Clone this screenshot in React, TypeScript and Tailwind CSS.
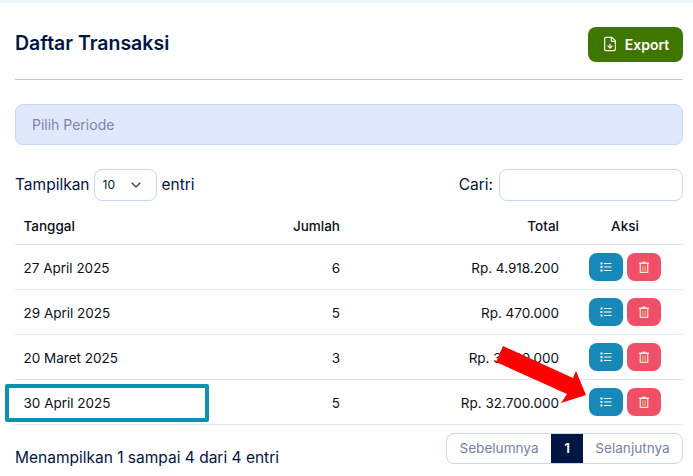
import { ChevronDown, FileDown } from "lucide-react";

const rows = [
  { date: "27 April 2025", qty: 6, total: "Rp. 4.918.200" },
  { date: "29 April 2025", qty: 5, total: "Rp. 470.000" },
  { date: "20 Maret 2025", qty: 3, total: "Rp. 3.500.000" },
  { date: "30 April 2025", qty: 5, total: "Rp. 32.700.000" },
];

function ListIcon() {
  return (
    <svg width="12" height="10" viewBox="0 0 12 10">
      <rect x="0.5" y="0.5" width="2" height="2" fill="#fff" />
      <rect x="0.5" y="4" width="2" height="2" fill="#fff" />
      <rect x="0.5" y="7.5" width="2" height="2" fill="#fff" />
      <path d="M4 1.5H11.5M4 5H11.5M4 8.5H11.5" stroke="#fff" strokeWidth="1.1" />
    </svg>
  );
}

function TrashIcon() {
  return (
    <svg width="12" height="12" viewBox="0 0 12 12" fill="none">
      <path d="M4.5 0.6H7.5V1.6H11V3H1V1.6H4.5Z" fill="#ffe9df" />
      <path d="M2.3 3V11.4H9.7V3" stroke="#ffe9df" strokeWidth="1.2" />
      <path d="M4.6 4.5V10M6 4.5V10M7.4 4.5V10" stroke="#f9a05f" strokeWidth="1" />
    </svg>
  );
}

export default function App() {
  return (
    <div className="relative h-[476px] w-[693px] overflow-hidden bg-white font-['Inter',sans-serif] text-[#001642]">
      <div className="h-[3px] bg-[#eff4ff]" />
      <div className="pr-[10px] pl-[15px]">
        {/* header */}
        <div className="flex h-[77px] items-center justify-between border-b border-[#c4c4d0] pt-[6px]">
          <h1 className="mb-[2px] text-[19.5px] leading-[24px] font-semibold">Daftar Transaksi</h1>
          <button className="flex h-[35px] w-[95px] items-center justify-center gap-[7px] rounded-lg bg-[#3f7600] text-[14px] font-semibold text-white">
            <FileDown size={16} strokeWidth={1.75} />
            Export
          </button>
        </div>

        <div className="mt-[24px] flex h-[41px] items-center rounded-lg border border-[#c5d7fe] bg-[#e0e8fe] px-4 text-[14px] text-[#8083ac]">
          Pilih Periode
        </div>

        {/* controls */}
        <div className="mt-[24px] flex h-[32px] items-center justify-between text-[15.5px]">
          <div className="flex items-center gap-[4px]">
            <span>Tampilkan</span>
            <div className="flex h-[32px] w-[63px] items-center justify-between rounded-lg border border-[#c5d7fe] pr-[12px] pl-[8px] text-[12px]">
              <span>10</span>
              <ChevronDown size={16} className="text-[#3a4258]" />
            </div>
            <span className="ml-[1px]">entri</span>
          </div>
          <div className="flex items-center gap-[6px]">
            <span>Cari:</span>
            <input className="h-[32px] w-[184px] rounded-lg border border-[#c5d7fe] bg-white" />
          </div>
        </div>

        {/* table */}
        <table className="mt-[7px] w-full table-fixed border-collapse text-[13.5px] text-[#0a0f1a]">
          <thead>
            <tr className="h-[36px] border-b border-[#e0e8fe] font-medium">
              <th className="w-[175px] pl-[8.5px] text-left font-medium">Tanggal</th>
              <th className="w-[150px] text-right font-medium">Jumlah</th>
              <th className="w-[219px] text-right font-medium">Total</th>
              <th className="pl-[8px] text-center font-medium">Aksi</th>
            </tr>
          </thead>
          <tbody>
            {rows.map((r) => (
              <tr key={r.date} className="h-[45px] border-b border-[#e0e8fe]">
                <td className="pt-[4px] pl-[8.5px]">{r.date}</td>
                <td className="pt-[4px] text-right">{r.qty}</td>
                <td className="pt-[4px] text-right">{r.total}</td>
                <td>
                  <div className="flex justify-center gap-[4px] pl-[8px]">
                    <button className="flex h-[28px] w-[34px] items-center justify-center rounded-lg bg-[#1789b9]">
                      <ListIcon />
                    </button>
                    <button className="flex h-[28px] w-[34px] items-center justify-center rounded-lg bg-[#ef5068]">
                      <TrashIcon />
                    </button>
                  </div>
                </td>
              </tr>
            ))}
          </tbody>
        </table>

        {/* footer */}
        <div className="mt-[8px] flex items-start justify-between text-[15.5px]">
          <span className="mt-[13px]">Menampilkan 1 sampai 4 dari 4 entri</span>
          <div className="flex h-[31px] overflow-hidden rounded-lg border border-[#c5d7fe] text-[13.6px] text-[#7b7eaa]">
            <span className="flex w-[104px] items-center justify-center">Sebelumnya</span>
            <span className="flex w-[32px] items-center justify-center bg-[#001642] font-semibold text-white">1</span>
            <span className="flex w-[99px] items-center justify-center">Selanjutnya</span>
          </div>
        </div>
      </div>

      {/* annotation overlays */}
      <div className="absolute top-[384px] left-[5px] h-[38px] w-[204px] rounded-[2px] border-[4px] border-[#0a93ae]" />
      <svg className="absolute top-[335px] left-[490px]" width="110" height="80" viewBox="0 0 110 80">
        <polygon points="13,11 6,27 77,59 71,68 96,60 86,36 83,43" fill="#ff0000" />
      </svg>
    </div>
  );
}
